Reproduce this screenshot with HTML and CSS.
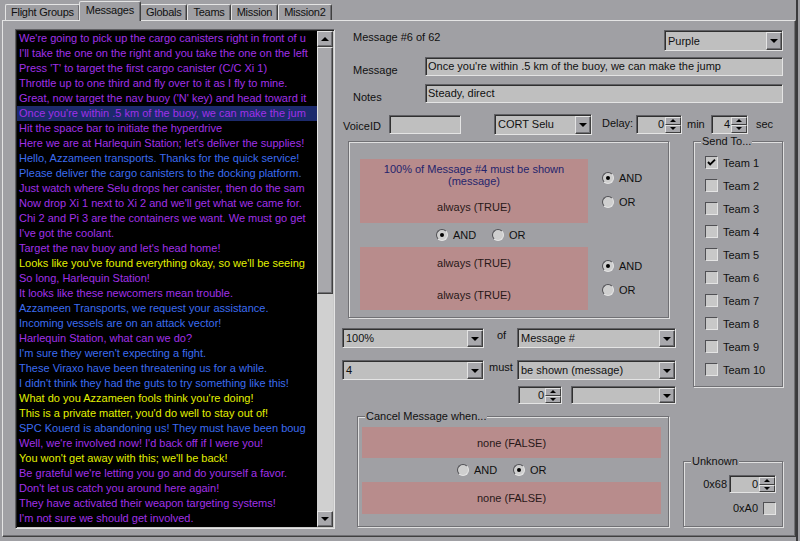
FILE: index.html
```html
<!DOCTYPE html>
<html>
<head>
<meta charset="utf-8">
<title>Messages</title>
<link rel="stylesheet" href="styles.css">
</head>
<body>
<div class="app">
  <div class="tabs">
    <div class="tab">Flight Groups</div>
    <div class="tab active">Messages</div>
    <div class="tab">Globals</div>
    <div class="tab">Teams</div>
    <div class="tab">Mission</div>
    <div class="tab">Mission2</div>
  </div>
  <div class="panel">
    <div class="listbox">
      <ul class="list">
        <li class="p">We're going to pick up the cargo canisters right in front of u</li>
        <li class="p">I'll take the one on the right and you take the one on the left</li>
        <li class="p">Press 'T' to target the first cargo canister (C/C Xi 1)</li>
        <li class="p">Throttle up to one third and fly over to it as I fly to mine.</li>
        <li class="p">Great, now target the nav buoy ('N' key) and head toward it</li>
        <li class="p sel">Once you're within .5 km of the buoy, we can make the jum</li>
        <li class="p">Hit the space bar to initiate the hyperdrive</li>
        <li class="p">Here we are at Harlequin Station; let's deliver the supplies!</li>
        <li class="b">Hello, Azzameen transports. Thanks for the quick service!</li>
        <li class="b">Please deliver the cargo canisters to the docking platform.</li>
        <li class="p">Just watch where Selu drops her canister, then do the sam</li>
        <li class="p">Now drop Xi 1 next to Xi 2 and we'll get what we came for.</li>
        <li class="p">Chi 2 and Pi 3 are the containers we want. We must go get</li>
        <li class="p">I've got the coolant.</li>
        <li class="p">Target the nav buoy and let's head home!</li>
        <li class="y">Looks like you've found everything okay, so we'll be seeing</li>
        <li class="p">So long, Harlequin Station!</li>
        <li class="p">It looks like these newcomers mean trouble.</li>
        <li class="b">Azzameen Transports, we request your assistance.</li>
        <li class="b">Incoming vessels are on an attack vector!</li>
        <li class="p">Harlequin Station, what can we do?</li>
        <li class="b">I'm sure they weren't expecting a fight.</li>
        <li class="b">These Viraxo have been threatening us for a while.</li>
        <li class="b">I didn't think they had the guts to try something like this!</li>
        <li class="y">What do you Azzameen fools think you're doing!</li>
        <li class="y">This is a private matter, you'd do well to stay out of!</li>
        <li class="b">SPC Kouerd is abandoning us! They must have been boug</li>
        <li class="p">Well, we're involved now! I'd back off if I were you!</li>
        <li class="y">You won't get away with this; we'll be back!</li>
        <li class="p">Be grateful we're letting you go and do yourself a favor.</li>
        <li class="p">Don't let us catch you around here again!</li>
        <li class="p">They have activated their weapon targeting systems!</li>
        <li class="p">I'm not sure we should get involved.</li>
      </ul>
      <div class="vscroll">
        <div class="sbtn up"></div>
        <div class="thumb"></div>
        <div class="track"></div>
        <div class="sbtn down"></div>
      </div>
    </div>

    <div class="right">
      <div class="row-a">
        <span class="count">Message #6 of 62</span>
        <div class="combo w-color"><span class="combo-text">Purple</span><span class="combo-btn"></span></div>
      </div>
      <div class="row-field">
        <span class="lbl">Message</span>
        <div class="field w-long">Once you're within .5 km of the buoy, we can make the jump</div>
      </div>
      <div class="row-field notes">
        <span class="lbl">Notes</span>
        <div class="field w-long">Steady, direct</div>
      </div>
      <div class="row-d">
        <span class="voice-lbl">VoiceID</span>
        <div class="field w-voice"></div>
        <div class="combo w-cort"><span class="combo-text">CORT Selu</span><span class="combo-btn"></span></div>
        <span class="delay-lbl">Delay:</span>
        <div class="spin w-min"><span class="spin-val">0</span><span class="spin-btns"><span class="sb sb-up"></span><span class="sb sb-dn"></span></span></div>
        <span class="min-lbl">min</span>
        <div class="spin w-sec"><span class="spin-val">4</span><span class="spin-btns"><span class="sb sb-up"></span><span class="sb sb-dn"></span></span></div>
        <span class="sec-lbl">sec</span>
      </div>

      <div class="lower">
        <div class="lower-left">
          <div class="group trigger">
            <div class="cond">
              <div class="pink p1">
                <div class="navy">100% of Message #4 must be shown</div>
                <div class="navy">(message)</div>
                <div class="dk gap1">always (TRUE)</div>
              </div>
              <div class="side-radios">
                <div class="radio"><span class="rc on"></span><span>AND</span></div>
                <div class="radio"><span class="rc"></span><span>OR</span></div>
              </div>
            </div>
            <div class="mid">
              <div class="radio r-and"><span class="rc on"></span><span>AND</span></div>
              <div class="radio"><span class="rc"></span><span>OR</span></div>
            </div>
            <div class="cond">
              <div class="pink p2">
                <div class="dk">always (TRUE)</div>
                <div class="dk gap2">always (TRUE)</div>
              </div>
              <div class="side-radios">
                <div class="radio"><span class="rc on"></span><span>AND</span></div>
                <div class="radio"><span class="rc"></span><span>OR</span></div>
              </div>
            </div>
          </div>

          <div class="ddrow r1">
            <div class="combo w-pct"><span class="combo-text">100%</span><span class="combo-btn"></span></div>
            <span class="of-lbl">of</span>
            <div class="combo w-type"><span class="combo-text">Message #</span><span class="combo-btn"></span></div>
          </div>
          <div class="ddrow r2">
            <div class="combo w-pct"><span class="combo-text">4</span><span class="combo-btn"></span></div>
            <span class="must-lbl">must</span>
            <div class="combo w-type"><span class="combo-text">be shown (message)</span><span class="combo-btn"></span></div>
          </div>
          <div class="ddrow r3">
            <div class="spin w-amt"><span class="spin-val">0</span><span class="spin-btns"><span class="sb sb-up"></span><span class="sb sb-dn"></span></span></div>
            <div class="combo w-empty"><span class="combo-text"></span><span class="combo-btn"></span></div>
          </div>

          <div class="group cancel">
            <span class="gtitle">Cancel Message when...</span>
            <div class="pink c1">none (FALSE)</div>
            <div class="mid cmid">
              <div class="radio r-and"><span class="rc"></span><span>AND</span></div>
              <div class="radio"><span class="rc on"></span><span>OR</span></div>
            </div>
            <div class="pink c2">none (FALSE)</div>
          </div>
        </div>

        <div class="lower-right">
          <div class="group sendto">
            <span class="gtitle">Send To...</span>
            <div class="chk-row"><span class="chk"><svg width="11" height="11" viewBox="0 0 11 11"><path d="M2 5 L4.2 7.4 L9 2.6" fill="none" stroke="#000" stroke-width="1.9"/></svg></span><span>Team 1</span></div>
            <div class="chk-row"><span class="chk"></span><span>Team 2</span></div>
            <div class="chk-row"><span class="chk"></span><span>Team 3</span></div>
            <div class="chk-row"><span class="chk"></span><span>Team 4</span></div>
            <div class="chk-row"><span class="chk"></span><span>Team 5</span></div>
            <div class="chk-row"><span class="chk"></span><span>Team 6</span></div>
            <div class="chk-row"><span class="chk"></span><span>Team 7</span></div>
            <div class="chk-row"><span class="chk"></span><span>Team 8</span></div>
            <div class="chk-row"><span class="chk"></span><span>Team 9</span></div>
            <div class="chk-row"><span class="chk"></span><span>Team 10</span></div>
          </div>
          <div class="group unknown">
            <span class="gtitle">Unknown</span>
            <div class="unk-row">
              <span class="unk-lbl">0x68</span>
              <div class="spin w-unk"><span class="spin-val">0</span><span class="spin-btns"><span class="sb sb-up"></span><span class="sb sb-dn"></span></span></div>
            </div>
            <div class="unk-row r-a0">
              <span class="unk-lbl">0xA0</span>
              <span class="chk"></span>
            </div>
          </div>
        </div>
      </div>
    </div>
  </div>
</div>
</body>
</html>
```

FILE: styles.css
```css
* { box-sizing: border-box; }
html, body { margin: 0; padding: 0; }
body {
  width: 800px;
  height: 541px;
  overflow: hidden;
  background: #a0a0a4;
  font-family: "Liberation Sans", Arial, sans-serif;
  font-size: 11px;
  color: #101010;
}
.app {
  width: 800px;
  height: 541px;
  box-shadow: inset -2px 0 0 #a0a0a4, inset -4px 0 0 #3a3a3c;
}

/* tabs */
.tabs {
  display: flex;
  align-items: flex-end;
  height: 20px;
  padding-left: 5px;
}
.tab {
  height: 16px;
  padding: 0 5px;
  line-height: 14px;
  letter-spacing: -0.25px;
  border: 1px solid;
  border-bottom: none;
  border-color: #e4e4e4 #404040 transparent #e4e4e4;
  border-radius: 2px 2px 0 0;
  box-shadow: inset -1px 0 0 #707074;
}
.tab.active {
  position: relative;
  z-index: 1;
  height: 20px;
  margin: 0 -1px -1px;
  padding: 0 6px;
  line-height: 16px;
  background: #a0a0a4;
}

/* main panel */
.panel {
  display: flex;
  height: 517px;
  margin: 0 4px 0 2px;
  padding: 8px 0 0 12px;
  border: 1px solid;
  border-color: #e4e4e4 #404040 #404040 #e4e4e4;
  box-shadow: inset -1px -1px 0 #707074;
}

/* message list */
.listbox {
  display: flex;
  width: 320px;
  height: 500px;
  padding: 1px;
  border: 1px solid;
  border-color: #606064 #e4e4e4 #e4e4e4 #606064;
  box-shadow: inset 1px 1px 0 #202020, inset -1px -1px 0 #c8c8c8;
  background: #000;
}
.list {
  width: 300px;
  height: 496px;
  margin: 0;
  padding: 0;
  list-style: none;
  overflow: hidden;
}
.list li {
  height: 15px;
  line-height: 15px;
  padding-left: 2px;
  white-space: nowrap;
  overflow: hidden;
}
.list li.sel { background: #1c2a6c; }
.p { color: #a030e8; }
.b { color: #3c6cf0; }
.y { color: #e2f000; }

.vscroll {
  display: flex;
  flex-direction: column;
  width: 16px;
  height: 496px;
  background: #d0d0d0;
}
.sbtn, .thumb {
  background: #a8a8ac;
  border: 1px solid;
  border-color: #e4e4e4 #404040 #404040 #e4e4e4;
  box-shadow: inset -1px -1px 0 #707074;
}
.sbtn {
  height: 16px;
  display: flex;
  align-items: center;
  justify-content: center;
}
.sbtn.up::after {
  content: "";
  border-left: 4px solid transparent;
  border-right: 4px solid transparent;
  border-bottom: 4px solid #000;
}
.sbtn.down::after {
  content: "";
  border-left: 4px solid transparent;
  border-right: 4px solid transparent;
  border-top: 4px solid #000;
}
.thumb { height: 247px; }
.track { flex: 1; }

/* right side */
.right {
  display: flex;
  flex-direction: column;
  width: 441px;
  margin-left: 7px;
}
.row-a {
  display: flex;
  justify-content: space-between;
  height: 21px;
  margin-top: 1px;
}
.count { margin-left: 11px; line-height: 14px; }

.row-field {
  display: flex;
  height: 19px;
  margin-top: 6px;
}
.row-field.notes { margin-top: 8px; }
.lbl {
  width: 72px;
  margin-left: 11px;
  padding-top: 7px;
  line-height: 13px;
}
.field {
  height: 19px;
  padding-left: 2px;
  line-height: 17px;
  white-space: nowrap;
  overflow: hidden;
  background: #bfbfbf;
  border: 1px solid;
  border-color: #606064 #e4e4e4 #e4e4e4 #606064;
  box-shadow: inset 1px 1px 0 #303030;
}
.w-long { width: 358px; }
.w-voice { width: 72px; }

.row-d {
  display: flex;
  align-items: center;
  height: 20px;
  margin-top: 11px;
}
.voice-lbl { width: 46px; margin-left: 1px; padding-top: 4px; }
.w-cort { width: 98px; height: 20px; margin-left: 33px; }
.delay-lbl { width: 34px; margin-left: 10px; padding-bottom: 2px; }
.w-min { width: 46px; }
.min-lbl { width: 24px; margin-left: 5px; }
.w-sec { width: 37px; }
.sec-lbl { margin-left: 8px; }

/* combo box */
.combo {
  display: flex;
  height: 21px;
  background: #bfbfbf;
  border: 1px solid;
  border-color: #606064 #e4e4e4 #e4e4e4 #606064;
  box-shadow: inset 1px 1px 0 #303030;
}
.combo-text {
  flex: 1;
  align-self: center;
  padding-left: 3px;
  white-space: nowrap;
  overflow: hidden;
}
.combo-btn {
  display: flex;
  align-items: center;
  justify-content: center;
  width: 16px;
  margin: 1px 0 0 0;
  background: #a8a8ac;
  border: 1px solid;
  border-color: #e4e4e4 #404040 #404040 #e4e4e4;
  box-shadow: inset -1px -1px 0 #707074;
}
.combo-btn::after {
  content: "";
  border-left: 4px solid transparent;
  border-right: 4px solid transparent;
  border-top: 4px solid #000;
}
.w-color { width: 119px; }
.w-pct { width: 142px; height: 20px; }
.w-type { width: 159px; height: 20px; }
.w-empty { width: 105px; height: 18px; margin-left: 9px; }

/* spinner */
.spin {
  display: flex;
  height: 19px;
  background: #bfbfbf;
  border: 1px solid;
  border-color: #606064 #e4e4e4 #e4e4e4 #606064;
  box-shadow: inset 1px 1px 0 #303030;
}
.spin-val {
  flex: 1;
  align-self: center;
  text-align: right;
  padding-right: 1px;
}
.spin-btns {
  display: flex;
  flex-direction: column;
  width: 16px;
  padding-top: 1px;
}
.sb {
  flex: 1;
  display: flex;
  align-items: center;
  justify-content: center;
  background: #a8a8ac;
  border: 1px solid;
  border-color: #e4e4e4 #404040 #404040 #e4e4e4;
}
.sb-up::after {
  content: "";
  border-left: 3px solid transparent;
  border-right: 3px solid transparent;
  border-bottom: 3px solid #000;
}
.sb-dn::after {
  content: "";
  border-left: 3px solid transparent;
  border-right: 3px solid transparent;
  border-top: 3px solid #000;
}
.w-amt { width: 44px; height: 18px; }
.w-unk { width: 47px; height: 18px; }

/* lower area */
.lower {
  display: flex;
  margin-top: 7px;
}
.lower-left {
  display: flex;
  flex-direction: column;
  width: 336px;
}
.lower-right {
  display: flex;
  flex-direction: column;
}

.group {
  position: relative;
  border: 1px solid #707074;
  box-shadow: inset 1px 1px 0 #e0e0e0, 1px 1px 0 #e0e0e0;
}
.gtitle {
  position: absolute;
  top: -7px;
  left: 7px;
  padding: 0 1px;
  line-height: 13px;
  background: #a0a0a4;
  white-space: nowrap;
}

.trigger {
  width: 321px;
  height: 177px;
  margin-left: 6px;
  padding: 17px 0 0 11px;
}
.cond { display: flex; }
.pink {
  width: 228px;
  background: #b88c8c;
  text-align: center;
  line-height: 12px;
  color: #281818;
}
.pink.p1 { height: 64px; padding-top: 4px; }
.pink.p2 { height: 63px; padding-top: 10px; }
.navy { color: #24246c; }
.gap1 { margin-top: 14px; }
.gap2 { margin-top: 20px; }

.side-radios {
  display: flex;
  flex-direction: column;
  gap: 12px;
  margin-left: 14px;
  padding-top: 13px;
}
.radio {
  display: flex;
  align-items: center;
  height: 12px;
  line-height: 12px;
}
.rc {
  position: relative;
  width: 12px;
  height: 12px;
  margin-right: 5px;
  border-radius: 50%;
  background: #cfcfcf;
  border: 1px solid;
  border-color: #505054 #e4e4e4 #e4e4e4 #505054;
}
.rc.on::after {
  content: "";
  position: absolute;
  left: 3px;
  top: 3px;
  width: 4px;
  height: 4px;
  border-radius: 50%;
  background: #000;
}
.mid {
  display: flex;
  align-items: center;
  height: 24px;
  padding-left: 76px;
}
.r-and { width: 56px; }

.ddrow {
  display: flex;
  height: 20px;
}
.ddrow.r1 { margin-top: 10px; }
.ddrow.r2 { margin-top: 12px; }
.ddrow.r3 { margin-top: 6px; height: 18px; padding-left: 176px; }
.of-lbl { width: 20px; margin-left: 13px; line-height: 14px; }
.must-lbl { width: 28px; margin-left: 5px; line-height: 14px; }

.cancel {
  width: 312px;
  height: 111px;
  margin: 12px 0 0 15px;
  padding: 10px 0 0 4px;
}
.pink.c1, .pink.c2 {
  width: 299px;
  display: flex;
  align-items: center;
  justify-content: center;
}
.pink.c1 { height: 31px; }
.pink.c2 { height: 32px; }
.cmid { padding-left: 95px; }

.sendto {
  width: 90px;
  height: 246px;
  margin-left: 15px;
  padding: 14px 0 0 11px;
}
.chk-row {
  display: flex;
  align-items: center;
  gap: 5px;
  height: 13px;
  margin-bottom: 10px;
}
.chk {
  display: flex;
  align-items: center;
  justify-content: center;
  width: 13px;
  height: 13px;
  background: #c8c8c8;
  border: 1px solid;
  border-color: #505054 #e4e4e4 #e4e4e4 #505054;
}
.unknown {
  display: flex;
  flex-direction: column;
  align-items: flex-end;
  width: 100px;
  height: 66px;
  margin: 74px 0 0 5px;
  padding: 13px 6px 0 0;
}
.unk-row {
  display: flex;
  align-items: center;
  gap: 2px;
}
.unk-row.r-a0 { margin-top: 9px; gap: 5px; }
.unk-lbl { line-height: 13px; }
```
